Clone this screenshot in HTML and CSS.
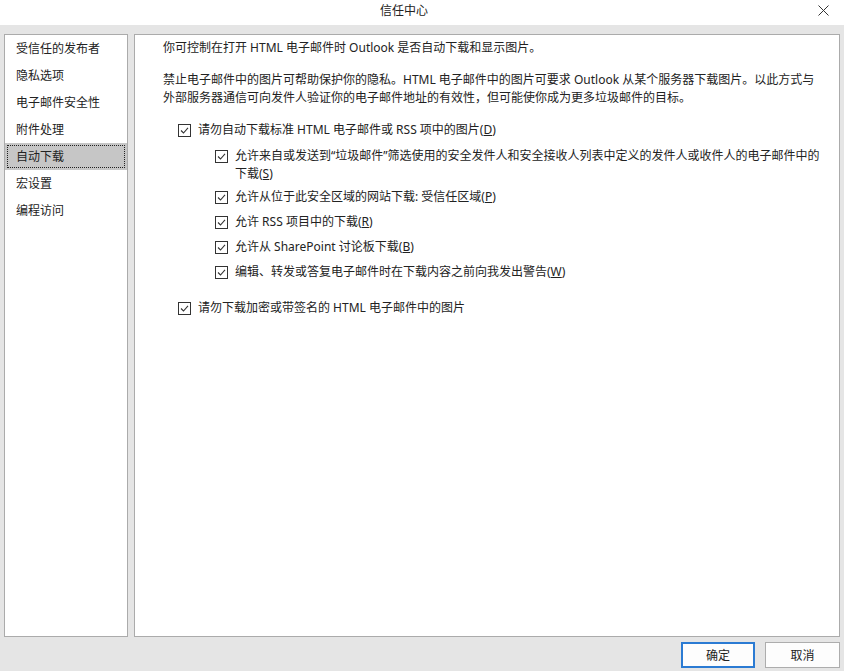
FILE: index.html
```html
<!DOCTYPE html>
<html lang="zh-CN">
<head>
<meta charset="UTF-8">
<title>信任中心</title>
<link rel="stylesheet" href="styles.css">
</head>
<body>
<div class="dialog">
  <div class="titlebar">
    <div class="title">信任中心</div>
    <button class="close" aria-label="关闭">
      <svg width="11" height="11" viewBox="0 0 11 11"><path d="M0.5 0.5 L10.5 10.5 M10.5 0.5 L0.5 10.5" stroke="#333" stroke-width="1" fill="none"/></svg>
    </button>
  </div>

  <div class="main">
    <!-- 左侧分类 -->
    <ul class="nav">
      <li>受信任的发布者</li>
      <li>隐私选项</li>
      <li>电子邮件安全性</li>
      <li>附件处理</li>
      <li class="active">自动下载</li>
      <li>宏设置</li>
      <li>编程访问</li>
    </ul>

    <!-- 自动下载 设置 -->
    <div class="panel">
      <p class="intro">你可控制在打开 HTML 电子邮件时 Outlook 是否自动下载和显示图片。</p>
      <p class="desc">禁止电子邮件中的图片可帮助保护你的隐私。HTML 电子邮件中的图片可要求 Outlook 从某个服务器下载图片。以此方式与外部服务器通信可向发件人验证你的电子邮件地址的有效性，但可能使你成为更多垃圾邮件的目标。</p>

      <label class="check top">
        <span class="box"><svg width="13" height="13" viewBox="0 0 13 13"><rect x="0.5" y="0.5" width="12" height="12" fill="#fff" stroke="#333"/><path d="M3 6.5 L5.5 9 L10 3.8" stroke="#333" stroke-width="1.1" fill="none"/></svg></span>
        <span class="text">请勿自动下载标准 HTML 电子邮件或 RSS 项中的图片(<u>D</u>)</span>
      </label>

      <div class="sub">
        <label class="check multi">
          <span class="box"><svg width="13" height="13" viewBox="0 0 13 13"><rect x="0.5" y="0.5" width="12" height="12" fill="#fff" stroke="#333"/><path d="M3 6.5 L5.5 9 L10 3.8" stroke="#333" stroke-width="1.1" fill="none"/></svg></span>
          <span class="text">允许来自或发送到“垃圾邮件”筛选使用的安全发件人和安全接收人列表中定义的发件人或收件人的电子邮件中的下载(<u>S</u>)</span>
        </label>
        <label class="check">
          <span class="box"><svg width="13" height="13" viewBox="0 0 13 13"><rect x="0.5" y="0.5" width="12" height="12" fill="#fff" stroke="#333"/><path d="M3 6.5 L5.5 9 L10 3.8" stroke="#333" stroke-width="1.1" fill="none"/></svg></span>
          <span class="text">允许从位于此安全区域的网站下载: 受信任区域(<u>P</u>)</span>
        </label>
        <label class="check">
          <span class="box"><svg width="13" height="13" viewBox="0 0 13 13"><rect x="0.5" y="0.5" width="12" height="12" fill="#fff" stroke="#333"/><path d="M3 6.5 L5.5 9 L10 3.8" stroke="#333" stroke-width="1.1" fill="none"/></svg></span>
          <span class="text">允许 RSS 项目中的下载(<u>R</u>)</span>
        </label>
        <label class="check">
          <span class="box"><svg width="13" height="13" viewBox="0 0 13 13"><rect x="0.5" y="0.5" width="12" height="12" fill="#fff" stroke="#333"/><path d="M3 6.5 L5.5 9 L10 3.8" stroke="#333" stroke-width="1.1" fill="none"/></svg></span>
          <span class="text">允许从 SharePoint 讨论板下载(<u>B</u>)</span>
        </label>
        <label class="check">
          <span class="box"><svg width="13" height="13" viewBox="0 0 13 13"><rect x="0.5" y="0.5" width="12" height="12" fill="#fff" stroke="#333"/><path d="M3 6.5 L5.5 9 L10 3.8" stroke="#333" stroke-width="1.1" fill="none"/></svg></span>
          <span class="text">编辑、转发或答复电子邮件时在下载内容之前向我发出警告(<u>W</u>)</span>
        </label>
      </div>

      <label class="check top last">
        <span class="box"><svg width="13" height="13" viewBox="0 0 13 13"><rect x="0.5" y="0.5" width="12" height="12" fill="#fff" stroke="#333"/><path d="M3 6.5 L5.5 9 L10 3.8" stroke="#333" stroke-width="1.1" fill="none"/></svg></span>
        <span class="text">请勿下载加密或带签名的 HTML 电子邮件中的图片</span>
      </label>
    </div>
  </div>

  <div class="footer">
    <button class="btn primary">确定</button>
    <button class="btn">取消</button>
  </div>
</div>
</body>
</html>
```

FILE: styles.css
```css
body {
  margin: 0;
  font-family: "Noto Sans", "Noto Sans CJK SC", sans-serif;
  font-size: 12px;
  line-height: 18px;
  color: #222;
  background-color: #e5e5e5;
}

.dialog {
  width: 844px;
  height: 671px;
  display: flex;
  flex-direction: column;
}

.titlebar {
  height: 25px;
  background-color: #fff;
  display: flex;
  align-items: center;
}

.title {
  flex: 1;
  text-align: center;
  margin-top: -4px;
}

.close {
  width: 36px;
  height: 25px;
  padding: 0 6px 0 0;
  margin-top: -5px;
  border: none;
  background: none;
  display: flex;
  align-items: center;
  justify-content: center;
}

.main {
  flex: 1;
  display: flex;
  gap: 6px;
  padding: 9px 4px 0 4px;
}

.nav {
  list-style: none;
  margin: 0;
  padding: 0;
  width: 122px;
  background-color: #fff;
  border: 1px solid #ababab;
}

.nav li {
  height: 27px;
  line-height: 27px;
  padding-left: 11px;
}

.nav li.active {
  background-color: #c6c6c6;
  outline: 1px dotted #222;
  outline-offset: -3px;
}

.panel {
  flex: 1;
  background-color: #fff;
  border: 1px solid #ababab;
  padding: 4px 14px 0 28px;
}

.panel p {
  margin: 0;
}

.desc {
  margin-top: 14px !important;
}

.check {
  display: flex;
  align-items: flex-start;
  gap: 7px;
}

.check .box {
  flex: none;
  height: 18px;
  box-sizing: border-box;
  display: flex;
  align-items: center;
  padding-top: 1px;
}

.check.top {
  margin: 14px 0 0 15px;
}

.check.top.last {
  margin-top: 18px;
}

.sub {
  display: flex;
  flex-direction: column;
  gap: 7px;
  margin: 8px 0 0 52px;
}

.check.multi {
  margin-bottom: -2px;
}

.footer {
  height: 34px;
  display: flex;
  justify-content: flex-end;
  align-items: flex-start;
  gap: 10px;
  padding: 5px 4px 0 0;
  box-sizing: border-box;
}

.btn {
  width: 75px;
  height: 26px;
  font-family: inherit;
  font-size: 12px;
  color: #222;
  background-color: #fdfdfd;
  border: 1px solid #adadad;
}

.btn.primary {
  width: 74px;
  border: 2px solid #2b7bd3;
}
```
